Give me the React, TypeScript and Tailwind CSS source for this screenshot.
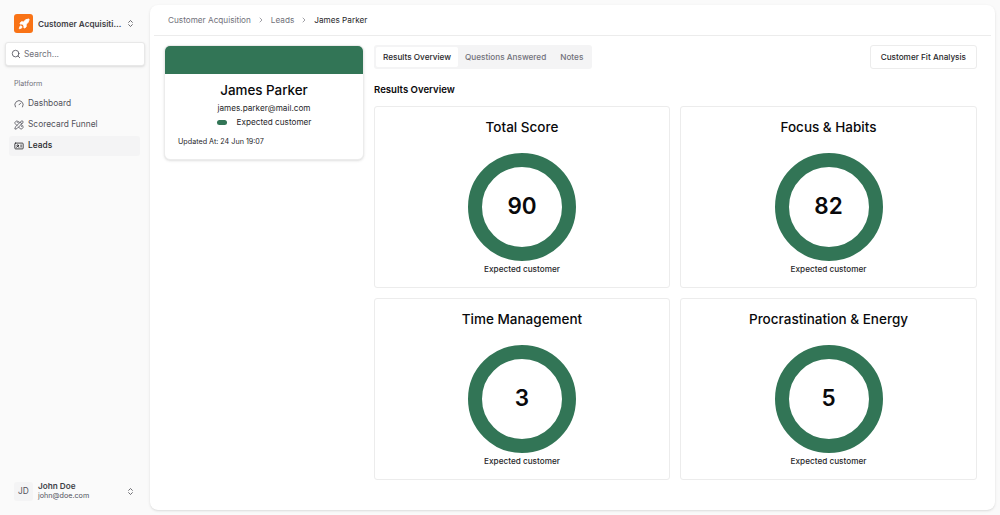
import { ChevronRight, ChevronsUpDown, Gauge, IdCard, PencilRuler, Rocket, Search } from "lucide-react";

const scores = [
  { title: "Total Score", value: 90 },
  { title: "Focus & Habits", value: 82 },
  { title: "Time Management", value: 3 },
  { title: "Procrastination & Energy", value: 5 },
];

const nav = [
  { label: "Dashboard", Icon: Gauge },
  { label: "Scorecard Funnel", Icon: PencilRuler },
  { label: "Leads", Icon: IdCard, active: true },
];

function Sidebar() {
  return (
    <aside className="flex w-[150px] shrink-0 flex-col px-[5px]">
      <div className="flex h-[38px] shrink-0 items-center pl-[9px] pt-[9px]">
        <div className="flex h-[19px] w-[19px] shrink-0 items-center justify-center rounded-[3px] bg-[#f97316]">
          <Rocket className="h-[12px] w-[12px] fill-white text-white" />
        </div>
        <span className="ml-[5px] w-[84px] truncate text-[8.2px] font-semibold leading-[12px] text-[#3f3f46]">Customer Acquisition</span>
        <ChevronsUpDown className="ml-[4px] h-[9px] w-[9px] shrink-0 text-[#3f3f46]" />
      </div>
      <div className="mt-[4px] flex h-[24px] items-center rounded-[3px] border border-[#e8e8e8] bg-white pl-[5px] shadow-sm">
        <Search className="h-[10px] w-[10px] text-[#52525b]" />
        <span className="ml-[3px] text-[8.4px] text-[#71717a]">Search...</span>
      </div>
      <p className="mt-[13px] pl-[9px] text-[7.2px] text-[#71717a]">Platform</p>
      <nav className="mt-[4px] ml-[4px] flex w-[131px] flex-col gap-[1px]">
        {nav.map(({ label, Icon, active }) => (
          <div key={label} className={`flex h-[20px] items-center gap-[4px] rounded-[3px] pl-[5px] text-[8.4px] ${active ? "bg-[#f4f4f5] font-medium text-[#27272a]" : "text-[#52525b]"}`}>
            <Icon className="h-[10px] w-[10px]" />
            {label}
          </div>
        ))}
      </nav>
      <div className="mt-auto mb-[14px] flex items-center pl-[9px]">
        <div className="flex h-[19px] w-[19px] shrink-0 items-center justify-center rounded-[3px] bg-[#f4f4f5] text-[8.4px] text-[#52525b]">JD</div>
        <div className="ml-[5px] w-[84px]">
          <p className="text-[8.2px] font-semibold leading-[10px] text-[#3f3f46]">John Doe</p>
          <p className="text-[7.2px] leading-[10px] text-[#52525b]">john@doe.com</p>
        </div>
        <ChevronsUpDown className="ml-[4px] h-[9px] w-[9px] shrink-0 text-[#3f3f46]" />
      </div>
    </aside>
  );
}

function ProfileCard() {
  return (
    <div className="h-[115px] w-[200px] shrink-0 overflow-hidden rounded-[6px] border border-[#ececec] bg-white shadow-sm">
      <div className="h-[28px] bg-[#327556]" />
      <p className="mt-[6px] text-center text-[13.4px] font-medium leading-[20px] text-[#09090b]">James Parker</p>
      <p className="mt-[2px] text-center text-[8.2px] leading-[12px] text-[#27272a]">james.parker@mail.com</p>
      <div className="mt-[2px] flex items-center justify-center gap-[10px] text-[8.2px] leading-[12px] text-[#27272a]">
        <span className="h-[5px] w-[10px] rounded-full bg-[#327556]" />
        Expected customer
      </div>
      <p className="mt-[8px] pl-[13px] text-[7.2px] leading-[11px] text-[#27272a]">Updated At: 24 Jun 19:07</p>
    </div>
  );
}

function ScoreCard({ title, value }: { title: string; value: number }) {
  return (
    <div className="flex h-[182px] flex-col items-center rounded-[3px] border border-[#ececec] bg-white pt-[10px]">
      <h3 className="text-[13.5px] font-medium leading-[20px] text-[#09090b]">{title}</h3>
      <div className="mt-[16px] flex h-[108px] w-[108px] items-center justify-center rounded-full border-[14px] border-[#327556]">
        <span className="-mt-[2px] text-[22.5px] font-semibold leading-[28px] text-[#09090b]">{value}</span>
      </div>
      <p className="mt-[2px] text-[8.2px] font-medium leading-[12px] text-[#27272a]">Expected customer</p>
    </div>
  );
}

export default function App() {
  return (
    <div className="flex h-[515px] w-[1000px] overflow-hidden bg-[#fafafa] font-['Inter',sans-serif]">
      <Sidebar />
      <main className="mt-[5px] h-[505px] w-[845px] rounded-[8px] bg-white shadow-sm">
        <header className="mx-[4px] flex h-[31px] items-center gap-[6px] border-b border-[#ececec] pl-[14px] text-[8.2px] text-[#71717a]">
          <span>Customer Acquisition</span>
          <ChevronRight className="h-[8px] w-[8px]" />
          <span>Leads</span>
          <ChevronRight className="h-[8px] w-[8px]" />
          <span className="text-[#27272a]">James Parker</span>
        </header>
        <div className="flex gap-[10px] pl-[14px] pr-[18px] pt-[9px]">
          <ProfileCard />
          <div className="flex-1">
            <div className="flex items-start justify-between">
              <div className="flex h-[24px] items-center rounded-[3px] bg-[#f4f4f5] p-[2px] text-[8.2px] font-medium text-[#71717a]">
                <span className="flex h-[20px] items-center rounded-[2px] bg-white px-[7px] text-[#27272a]">Results Overview</span>
                <span className="px-[7px]">Questions Answered</span>
                <span className="px-[7px]">Notes</span>
              </div>
              <button className="h-[24px] rounded-[3px] border border-[#ececec] bg-white px-[10px] text-[8.2px] font-medium text-[#27272a]">Customer Fit Analysis</button>
            </div>
            <h2 className="mt-[14px] text-[9.6px] font-semibold leading-[14px] text-[#09090b]">Results Overview</h2>
            <div className="mt-[9px] grid grid-cols-[296px_297px] gap-[10px]">
              {scores.map((s) => (
                <ScoreCard key={s.title} title={s.title} value={s.value} />
              ))}
            </div>
          </div>
        </div>
      </main>
    </div>
  );
}
